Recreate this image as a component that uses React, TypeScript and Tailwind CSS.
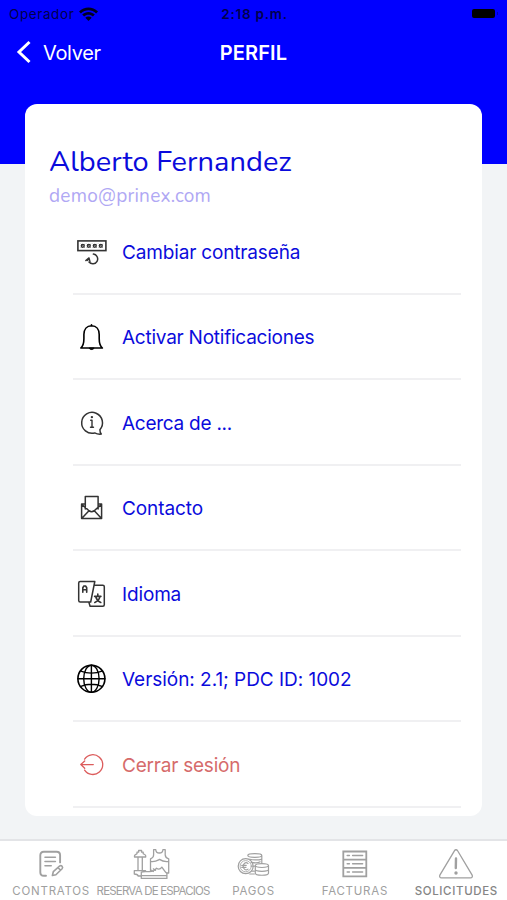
import type { ReactNode } from 'react';

const stroke = { fill: 'none', stroke: 'currentColor', strokeLinecap: 'round', strokeLinejoin: 'round' } as const;

function MenuIcon({ children }: { children: ReactNode }) {
  return (
    <svg viewBox="0 0 32 32" className="h-8 w-8 shrink-0" strokeWidth="1.6" {...stroke}>
      {children}
    </svg>
  );
}

function PasswordIcon() {
  return (
    <MenuIcon>
      <rect x="1.900" y="4.900" width="28" height="9.700" strokeLinejoin="miter" strokeWidth="1.600" />
      {[6.8, 12.8, 18.8, 24.8].map((x) => (
        <g key={x}>
          <circle cx={x} cy="9.800" r="1.500" strokeWidth="1.300" />
          <path d={`M${x - 1.7} 8.100l3.400 3.400m0-3.400l-3.400 3.400`} strokeWidth=".6" />
        </g>
      ))}
      <path d="M17.400 18.100a4.900 4.900 0 1 1-4.400 8" strokeWidth="1.500" />
      <path d="M9.800 24.600l3.200-2.700 1 3.700m-1-3.700l-1.400 2.500" strokeWidth="1.400" />
    </MenuIcon>
  );
}

function BellIcon() {
  return (
    <MenuIcon>
      <path d="M15.500 3.800v1.200M4.800 27c2.400-2 3.100-4.500 3.100-9.200v-4.200c0-5.200 2.800-8.900 7.700-8.900s7.600 3.700 7.600 8.900v4.200c0 4.700.8 7.200 3.200 9.200z" />
      <path d="M13.200 27.300c.5 1.800 4.300 1.800 4.800 0z" fill="currentColor" strokeWidth=".8" />
    </MenuIcon>
  );
}

function InfoIcon() {
  return (
    <MenuIcon>
      <path d="M23.900 22.700a10.400 10.400 0 1 0-5.200 3.200c1.900 1 4.300 1.500 6.600 1.200-.9-1-1.400-2.600-1.400-4.400z" strokeWidth="1.500" />
      <path d="M14.700 13.300h1.300v6.900m-1.500 0h3" strokeWidth="1.400" />
      <circle cx="15.900" cy="10.100" r="1.200" fill="currentColor" stroke="none" />
    </MenuIcon>
  );
}

function ContactIcon() {
  return (
    <MenuIcon>
      <path d="M9.300 12H5.600v14.500h20V12h-3.500M9.300 17V4.500h12.800V17M5.900 12.600l7.100 6.100c1.700 1.300 3.500 1.300 5.200 0l7.100-6.100M5.900 26.200l7.100-7.400m5.300 0l7 7.400" strokeWidth="1.500" />
    </MenuIcon>
  );
}

function LanguageIcon() {
  return (
    <MenuIcon>
      <path d="M18.800 3.500H4.200c-1 0-1.500.6-1.500 1.500v17.500c0 1 .5 1.500 1.500 1.500h10.500zM18.200 7.200h8.600c1 0 1.500.6 1.500 1.500v18c0 1-.5 1.500-1.500 1.500H14.100l-1.300-4.200" strokeWidth="1.500" />
      <path d="M6.800 14.200V9.700L7.900 8h1.700l1.100 1.700v4.500m-3.900-2.500h3.900" strokeWidth="1.600" />
      <path d="M21.800 16v2m-3.200.4h6.300m-1 .3c-.6 2.900-2.400 4.800-5.100 5.800m1-5.600c.8 2.700 2.500 4.600 5 5.500" strokeWidth="1.600" />
    </MenuIcon>
  );
}

function GlobeIcon() {
  return (
    <MenuIcon>
      <circle cx="15.400" cy="15.700" r="13.500" />
      <ellipse cx="15.400" cy="15.700" rx="7.700" ry="13.500" strokeWidth="1.400" />
      <path d="M15.400 2.200v27M1.900 15.700h27M4.900 8.100c6.200 2.700 14.800 2.700 21 0M4.900 23.300c6.200-2.700 14.800-2.700 21 0" strokeWidth="1.400" />
    </MenuIcon>
  );
}

function LogoutIcon() {
  return (
    <MenuIcon>
      <path d="M8.600 10.100a9.900 9.900 0 1 1 0 11M4.800 15.600h12.500M8.700 12L4.800 15.600l3.900 3.600" strokeWidth="1.300" />
    </MenuIcon>
  );
}

function TabIcon({ children }: { children: ReactNode }) {
  return (
    <svg viewBox="0 0 40 36" className="h-9 w-10" strokeWidth="1.4" {...stroke}>
      {children}
    </svg>
  );
}

function ContractIcon() {
  return (
    <TabIcon>
      <path d="M15 29.800h-2.200c-2.300 0-3.500-1.200-3.500-3.500V9.200c0-2.300 1.200-3.500 3.500-3.500h12.800c2.300 0 3.500 1.200 3.500 3.500v7.200" strokeWidth="1.900" />
      <path d="M14 11.200h10.400M14 15.500h10.400M14 19.800h6.200" strokeWidth="1.600" />
      <path d="M21.400 29.500l.9-3.800 6.500-5.800c1.600-1 3.700 1.200 2.300 2.800l-6.200 6zM27 21.600l2.400 2.400" strokeWidth="1.600" />
    </TabIcon>
  );
}

function SpacesIcon() {
  return (
    <TabIcon>
      <g strokeWidth="1.300">
        <path d="M2.500 11V9.700c0-1 1.600-1.300 2.500-2V6.200h1.600V4.500h3v1.700h1.600v1.500c1 .7 2.500 1 2.500 2V11zM6 11v13.600M10.300 11v13.600M2.300 24.700h11.200v3.500c-1.300.2-2.200.6-2.600 1.800H6.200c-.3-1.300-1.400-1.700-3.900-2z" />
        <path d="M21.600 3.700h2.200c.2 4.400 6.900 4.400 7.100 0h2.300v5.200c.1 2 1.200 3.300 3.500 3.900V27H18.500V12.800c2.200-.8 3.200-2 3.100-3.900zM18.800 15.500c5 .5 6.400-.8 8.700-2.100 2.300 1.600 4 2.600 8.800 2.100" />
        <path d="M9.300 26.200v6.200h25.600v-5c-2.200-1.700-3.600-4.200-5-6.300-1.400 1.900-3.200 2.700-5.400 1.100-2 2.800-4 3.500-6.800 3.500-3.500 0-5.500-.8-8.400.5z" fill="white" />
        <path d="M9.500 29.700h25M19.400 24.300l2 1.200m0-2.600l2.100 1.400" />
      </g>
    </TabIcon>
  );
}

function CoinsIcon() {
  return (
    <TabIcon>
      <g strokeWidth="1.200">
        <path d="M14.800 9.500c0-2.400 14-2.400 14 0v8m-14-8c0 2.400 14 2.400 14 0m-12 3.700c3.100 1.200 12 1 12-.8M18 16.400c3 .6 7.600.4 9.200-.6M18.800 20c1 .2 2 .3 3 .2M19 25.200h2.400M16.800 28h4.500" />
        <circle cx="12.700" cy="20.200" r="7.500" />
        <circle cx="12.700" cy="20.200" r="5.600" strokeWidth=".8" />
        <path d="M15 17.500c-2.600-2-4.800.3-4.800 2.800s2.300 4.800 4.800 2.800M8.700 19.300h4.600m-4.600 2h4.300" />
        <path d="M22.300 19.600c0-2.700 13.200-2.700 13.200 0v7.700c0 2.600-13.200 2.600-13.200 0zm0 0c0 2.500 13.200 2.500 13.200 0m-13.200 4c0 2.300 13.200 2.300 13.200 0" />
      </g>
    </TabIcon>
  );
}

function InvoiceIcon() {
  return (
    <TabIcon>
      <path d="M8.300 5.500h23v24.800h-23zM8.300 13.700h23M8.300 21.800h23" strokeWidth="1.800" strokeLinejoin="miter" />
      <path d="M12.200 9.600h2.200m3.200 0h10m-15.400 8.100h2.200m3.200 0h10m-15.400 8.200h2.200m3.200 0h10" strokeWidth="1.500" />
    </TabIcon>
  );
}

function WarningIcon() {
  return (
    <TabIcon>
      <path d="M18.400 4.800c.8-1.400 2.400-1.400 3.200 0L36 28.900c.9 1.700.2 3-1.600 3H5.600c-1.800 0-2.500-1.300-1.600-3z" strokeWidth="1.300" />
      <path d="M20 12.500l-.2 9.500" strokeWidth="2.400" />
      <circle cx="20" cy="27" r="1.700" fill="currentColor" stroke="none" />
    </TabIcon>
  );
}

const menu = [
  { label: 'Cambiar contraseña', icon: <PasswordIcon />, tone: 'text-[#333]', text: 'tracking-[-0.16px]' },
  { label: 'Activar Notificaciones', icon: <BellIcon />, tone: 'text-black', text: 'tracking-[-0.24px]' },
  { label: 'Acerca de ...', icon: <InfoIcon />, tone: 'text-[#333]', text: 'tracking-[-0.26px]' },
  { label: 'Contacto', icon: <ContactIcon />, tone: 'text-[#333]', text: 'tracking-[-0.08px]' },
  { label: 'Idioma', icon: <LanguageIcon />, tone: 'text-[#333]', text: 'tracking-[-0.15px]' },
  { label: 'Versión: 2.1; PDC ID: 1002', icon: <GlobeIcon />, tone: 'text-black', text: 'tracking-[-0.04px]' },
  { label: 'Cerrar sesión', icon: <LogoutIcon />, tone: 'text-[#dc5c5c]', text: 'text-[#d66b6b] tracking-[-0.22px]' },
];

const tabs = [
  { label: 'CONTRATOS', icon: <ContractIcon />, text: 'pl-[1px] tracking-[0.75px]' },
  { label: 'RESERVA DE ESPACIOS', icon: <SpacesIcon />, text: 'pl-[2px] tracking-[-0.82px]' },
  { label: 'PAGOS', icon: <CoinsIcon />, text: 'tracking-[0.75px]' },
  { label: 'FACTURAS', icon: <InvoiceIcon />, text: 'tracking-[0.75px]' },
  { label: 'SOLICITUDES', icon: <WarningIcon />, text: 'tracking-[0.65px] font-medium text-[#858585]' },
];

export default function App() {
  return (
    <div className="flex h-[900px] w-[507px] flex-col overflow-hidden bg-[#f2f4f6] font-['Inter','Liberation_Sans',sans-serif]">
      <header className="h-[164px] shrink-0 bg-[#0000ff]">
        <div className="grid h-7 grid-cols-3 items-center pr-[9px] pl-[9px] text-[13.5px] text-[#00004c]">
          <div className="flex items-center gap-[5px]">
            <span className="tracking-[0.6px]">Operador</span>
            <svg viewBox="0 0 19 14" className="h-[14px] w-[19px] text-[#000020]" fill="currentColor">
              <path d="M0 4.400C5.400-.9 13.600-.9 19 4.400l-1.900 2C12.700 2.200 6.300 2.200 1.900 6.400zM3.200 7.600c3.600-3.500 9-3.500 12.600 0l-1.900 2c-2.500-2.400-6.300-2.400-8.800 0zM6.300 10.700c1.800-1.700 4.600-1.700 6.400 0L9.500 14z" />
            </svg>
          </div>
          <span className="pl-[2px] text-center font-semibold tracking-[0.75px] whitespace-nowrap">2:18 p.m.</span>
          <span className="flex items-center justify-end gap-[2px] pb-px">
            <span className="h-[9px] w-[23px] rounded-[2px] bg-black" />
            <span className="h-[3px] w-px bg-[#0000b0]" />
          </span>
        </div>
        <nav className="grid h-12 grid-cols-3 items-center px-4 text-xl text-white">
          <div className="flex items-center gap-3">
            <svg viewBox="0 0 15 24" className="h-6 w-[15px]" strokeWidth="3" {...stroke}>
              <path d="M13.500 2L3 12l10.500 10" strokeLinecap="butt" strokeLinejoin="miter" />
            </svg>
            <span className="pt-px tracking-[-0.35px]">Volver</span>
          </div>
          <h1 className="pt-px text-center font-semibold tracking-[0.1px]">PERFIL</h1>
        </nav>
      </header>

      <main className="z-10 -mt-[60.5px] mr-[25px] ml-[25px] h-[712.5px] shrink-0 overflow-hidden rounded-[12px] bg-white text-[#0b0bdc]">
        <div className="h-[105.5px] pt-[39.5px] pl-6 font-['Nunito','Noto_Sans',sans-serif]">
          <h2 className="text-[29px] leading-[38px] font-normal tracking-[0.05px] whitespace-nowrap">Alberto Fernandez</h2>
          <p className="text-[19px] leading-[31px] tracking-[0.23px] whitespace-nowrap text-[#b0a8f4]">demo@prinex.com</p>
        </div>
        <ul className="mr-[21px] ml-12">
          {menu.map((item) => (
            <li key={item.label} className="flex h-[85.5px] items-center border-b-2 border-[#f0f0f2] pl-[3px]">
              <span className={`pt-[2px] ${item.tone}`}>{item.icon}</span>
              <span className={`ml-[14px] pt-[4px] text-[19px] whitespace-nowrap ${item.text}`}>{item.label}</span>
            </li>
          ))}
        </ul>
      </main>

      <footer className="mt-auto grid h-[61px] shrink-0 grid-cols-5 border-t-2 border-[#e3e4e7] bg-white text-[#a0a0a0]">
        {tabs.map((tab) => (
          <div key={tab.label} className="flex flex-col items-center pt-[5px]">
            {tab.icon}
            <span className={`mt-px text-[11.5px] leading-4 whitespace-nowrap ${tab.text}`}>{tab.label}</span>
          </div>
        ))}
      </footer>
    </div>
  );
}
